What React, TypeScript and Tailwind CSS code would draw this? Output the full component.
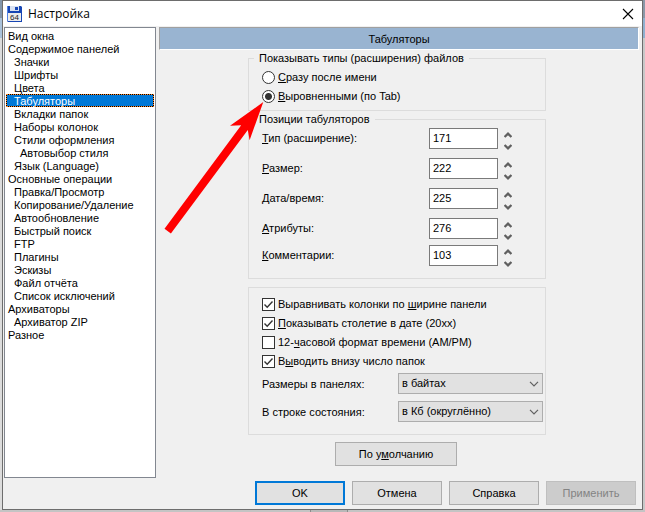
import React, { useState } from 'react';

interface Section {
  name: string;
  level: number;
}

interface TabStop {
  id: string;
  hot: string;
  rest: string;
  value: number;
}

interface Option {
  id: string;
  before: string;
  hot: string;
  after: string;
  checked: boolean;
}

const sections: Section[] = [
  { name: 'Вид окна', level: 0 },
  { name: 'Содержимое панелей', level: 0 },
  { name: 'Значки', level: 1 },
  { name: 'Шрифты', level: 1 },
  { name: 'Цвета', level: 1 },
  { name: 'Табуляторы', level: 1 },
  { name: 'Вкладки папок', level: 1 },
  { name: 'Наборы колонок', level: 1 },
  { name: 'Стили оформления', level: 1 },
  { name: 'Автовыбор стиля', level: 2 },
  { name: 'Язык (Language)', level: 1 },
  { name: 'Основные операции', level: 0 },
  { name: 'Правка/Просмотр', level: 1 },
  { name: 'Копирование/Удаление', level: 1 },
  { name: 'Автообновление', level: 1 },
  { name: 'Быстрый поиск', level: 1 },
  { name: 'FTP', level: 1 },
  { name: 'Плагины', level: 1 },
  { name: 'Эскизы', level: 1 },
  { name: 'Файл отчёта', level: 1 },
  { name: 'Список исключений', level: 1 },
  { name: 'Архиваторы', level: 0 },
  { name: 'Архиватор ZIP', level: 1 },
  { name: 'Разное', level: 0 },
];

const indents = ['pl-px', 'pl-[7px]', 'pl-[13px]'];

const initialStops: TabStop[] = [
  { id: 'type', hot: 'Т', rest: 'ип (расширение):', value: 171 },
  { id: 'size', hot: 'Р', rest: 'азмер:', value: 222 },
  { id: 'date', hot: 'Д', rest: 'ата/время:', value: 225 },
  { id: 'attr', hot: 'А', rest: 'трибуты:', value: 276 },
  { id: 'comment', hot: 'К', rest: 'омментарии:', value: 103 },
];

const initialOptions: Option[] = [
  { id: 'align', before: 'Выравнивать колонки по ', hot: 'ш', after: 'ирине панели', checked: true },
  { id: 'century', before: '', hot: 'П', after: 'оказывать столетие в дате (20xx)', checked: true },
  { id: 'ampm', before: '12-', hot: 'ч', after: 'асовой формат времени (AM/PM)', checked: false },
  { id: 'count', before: 'В', hot: 'ы', after: 'водить внизу число папок', checked: true },
];

const DiskIcon: React.FC = () => (
  <svg className="h-4 w-4" viewBox="0 0 16 16" aria-hidden="true">
    <path d="M1 0h13l1 1v15H1L0 15V0z" fill="#1746b4" />
    <path d="M0 0h1v15H0z" fill="#4f83e6" />
    <path d="M3 0h9v5H3z" fill="#d9e2f2" />
    <path d="M8 1h3v3H8z" fill="#1746b4" />
    <path d="M1 7h13v8H1z" fill="#ececec" />
    <text x="7.5" y="14" fontSize="8" textAnchor="middle" fill="#222" fontFamily="Liberation Sans, sans-serif">64</text>
  </svg>
);

const Chevron: React.FC<{ down?: boolean }> = ({ down }) => (
  <svg className="h-[6px] w-2" viewBox="0 0 8 6" fill="none" stroke="#606060" strokeWidth="2.2" aria-hidden="true">
    <path d={down ? 'M.6 1L4 4.4 7.4 1' : 'M.6 5L4 1.6 7.4 5'} />
  </svg>
);

const Dropdown: React.FC<{ id: string; label: string; options: string[] }> = ({ id, label, options }) => (
  <div className="flex items-center justify-between">
    <label htmlFor={id} className="pt-0.5">{label}</label>
    <div className="relative">
      <select id={id} className="block h-[21px] w-[145px] appearance-none border border-[#adadad] bg-[#e1e1e1] pl-[3px] pr-5">
        {options.map(o => (
          <option key={o}>{o}</option>
        ))}
      </select>
      <svg className="pointer-events-none absolute right-1 top-2 h-[6px] w-[10px]" viewBox="0 0 10 6" fill="none" stroke="#606060" strokeWidth="1.2">
        <path d="M1 .8l4 4 4-4" />
      </svg>
    </div>
  </div>
);

const App: React.FC = () => {
  const [section, setSection] = useState('Табуляторы');
  const [aligned, setAligned] = useState(true);
  const [stops, setStops] = useState(initialStops);
  const [options, setOptions] = useState(initialOptions);

  const setStop = (id: string, value: number) =>
    setStops(stops.map(s => (s.id === id ? { ...s, value } : s)));

  const toggle = (id: string) =>
    setOptions(options.map(o => (o.id === id ? { ...o, checked: !o.checked } : o)));

  const radio =
    'h-[13px] w-[13px] appearance-none rounded-full border border-[#333] bg-white checked:bg-[radial-gradient(circle,#333_3px,#fff_4px)]';
  const button = 'h-6 w-[90px] border border-[#adadad] bg-[#e1e1e1]';

  return (
    <div className="flex min-h-screen flex-col bg-[#c8c8c8] font-['Liberation_Sans',sans-serif] text-[11px] leading-[13px] text-black">
      <div className="flex flex-1">
        <div className="flex w-0.5 flex-col bg-[#dcdcdc]">
          <div className="h-[18px] bg-[#8296ac]" />
          <div className="h-[20px] bg-[#a9c1da]" />
        </div>

        <main className="flex flex-1 flex-col border border-[#6d6d6d] bg-[#f0f0f0]">
          <header className="flex h-[25px] items-center justify-between bg-white pl-1 pr-2">
            <div className="flex items-center gap-[5px]">
              <DiskIcon />
              <h1 className="font-['Open_Sans',sans-serif] text-[12px] leading-4">Настройка</h1>
            </div>
            <button type="button" aria-label="Закрыть">
              <svg className="h-3 w-3" viewBox="0 0 12 12" stroke="#000" strokeWidth="1.1">
                <path d="M1 1l10 10M11 1L1 11" />
              </svg>
            </button>
          </header>

          <div className="flex flex-1 gap-[3px] pl-px pr-[3px] pt-px">
            <ul className="w-[152px] shrink-0 border border-[#828790] bg-white p-px">
              {sections.map(s => (
                <li key={s.name} className={s.name === section ? 'bg-black' : ''}>
                  <button
                    type="button"
                    onClick={() => setSection(s.name)}
                    className={`block h-[13px] w-full whitespace-nowrap border border-dotted bg-clip-padding text-left ${indents[s.level]} ${
                      s.name === section ? 'border-[#ff8728] bg-[#0078d7] text-white' : 'border-transparent'
                    }`}
                  >
                    {s.name}
                  </button>
                </li>
              ))}
            </ul>

            <div className="flex flex-1 flex-col">
              <h2 className="flex h-[23px] items-center justify-center border border-[#a0a0a0] border-b-white border-r-white bg-[#99b4d1] pt-px">
                Табуляторы
              </h2>

              <div className="mr-1 flex flex-col items-center">
                <div className="relative flex w-[298px] flex-col pt-[2px]">
                  <fieldset className="h-[59px] border border-[#dcdcdc] px-[13px]">
                    <legend className="-ml-2 px-[5px]">Показывать типы (расширения) файлов</legend>
                    <div className="flex flex-col gap-[6px] pt-[6px]">
                      <label className="flex items-center gap-[3px]">
                        <input type="radio" name="mode" className={radio} checked={!aligned} onChange={() => setAligned(false)} />
                        <span><u>С</u>разу после имени</span>
                      </label>
                      <label className="flex items-center gap-[3px]">
                        <input type="radio" name="mode" className={radio} checked={aligned} onChange={() => setAligned(true)} />
                        <span><u>В</u>ыровненными (по Tab)</span>
                      </label>
                    </div>
                  </fieldset>

                  <fieldset className="mt-[2px] h-[166px] border border-[#dcdcdc] px-[13px]">
                    <legend className="-ml-2 px-[5px]">Позиции табуляторов</legend>
                    <div className="flex flex-col gap-[9px] pt-[2px]">
                      {stops.map(s => (
                        <div key={s.id} className="flex h-[21px] items-center last:-mt-[3px]">
                          <label htmlFor={s.id} className="flex-1"><u>{s.hot}</u>{s.rest}</label>
                          <input
                            id={s.id}
                            value={s.value}
                            onChange={e => setStop(s.id, Number(e.target.value))}
                            className="h-[21px] w-[69px] border border-[#7a7a7a] bg-white px-[3px] pb-0.5"
                          />
                          <div className="ml-[6px] mr-5 flex flex-col gap-[6px] pt-1">
                            <button type="button" aria-label="Больше" onClick={() => setStop(s.id, s.value + 1)}><Chevron /></button>
                            <button type="button" aria-label="Меньше" onClick={() => setStop(s.id, s.value - 1)}><Chevron down /></button>
                          </div>
                        </div>
                      ))}
                    </div>
                  </fieldset>

                  <fieldset className="mt-2 h-[148px] border border-[#dcdcdc] pl-[13px] pr-[2px]">
                    <div className="flex flex-col gap-[6px] pt-[10px]">
                      {options.map(o => (
                        <label key={o.id} className="flex items-center gap-[3px]">
                          <span className="grid">
                            <input
                              type="checkbox"
                              checked={o.checked}
                              onChange={() => toggle(o.id)}
                              className="col-start-1 row-start-1 h-[13px] w-[13px] appearance-none border border-[#333] bg-white"
                            />
                            {o.checked && (
                              <svg className="pointer-events-none col-start-1 row-start-1 h-[13px] w-[13px]" viewBox="0 0 13 13" fill="none" stroke="#333" strokeWidth="1.4">
                                <path d="M2.5 6.5l2.7 2.7 5.3-5.6" />
                              </svg>
                            )}
                          </span>
                          <span className="whitespace-pre">{o.before}<u>{o.hot}</u>{o.after}</span>
                        </label>
                      ))}
                    </div>
                    <div className="flex flex-col gap-[7px] pt-[5px]">
                      <Dropdown id="panels" label="Размеры в панелях:" options={['в байтах', 'в Кб (округлённо)']} />
                      <Dropdown id="status" label="В строке состояния:" options={['в Кб (округлённо)', 'в байтах']} />
                    </div>
                  </fieldset>

                  <svg className="pointer-events-none absolute -left-[84px] top-[50px] h-[134px] w-[100px]" viewBox="0 0 100 134" fill="#f00" aria-hidden="true">
                    <path d="M99.3 2L85.6 40.2l-1.8-10.2L6.9 133.5l-6.4-4.8L77.2 25.2l-11.2.6z" />
                  </svg>
                </div>

                <button type="button" className="mr-0.5 mt-[7px] h-6 w-[122px] border border-[#adadad] bg-[#e1e1e1]">
                  По у<u>м</u>олчанию
                </button>
              </div>
            </div>
          </div>

          <footer className="flex justify-end gap-[7px] pb-1 pl-2 pr-[6px] pt-[3px]">
            <button type="button" className="h-6 w-[90px] border-2 border-[#0078d7] bg-[#e1e1e1]">OK</button>
            <button type="button" className={button}>Отмена</button>
            <button type="button" className={button}>Справка</button>
            <button type="button" disabled className="h-6 w-[90px] border border-[#bfbfbf] bg-[#cccccc] text-[#838383]">
              Применить
            </button>
          </footer>
        </main>

        <div className="flex w-0.5 flex-col bg-[#c8c8c8]">
          <div className="h-[18px] bg-[#8a98a8]" />
          <div className="h-[20px] bg-[#8fb0cf]" />
        </div>
      </div>
      <div className="flex h-0.5 justify-center bg-[#c4c4c4]">
        <div className="ml-3 w-[38px] border-x border-[#8c8c8c] bg-[#b8b8b8]" />
      </div>
    </div>
  );
};

export default App;
